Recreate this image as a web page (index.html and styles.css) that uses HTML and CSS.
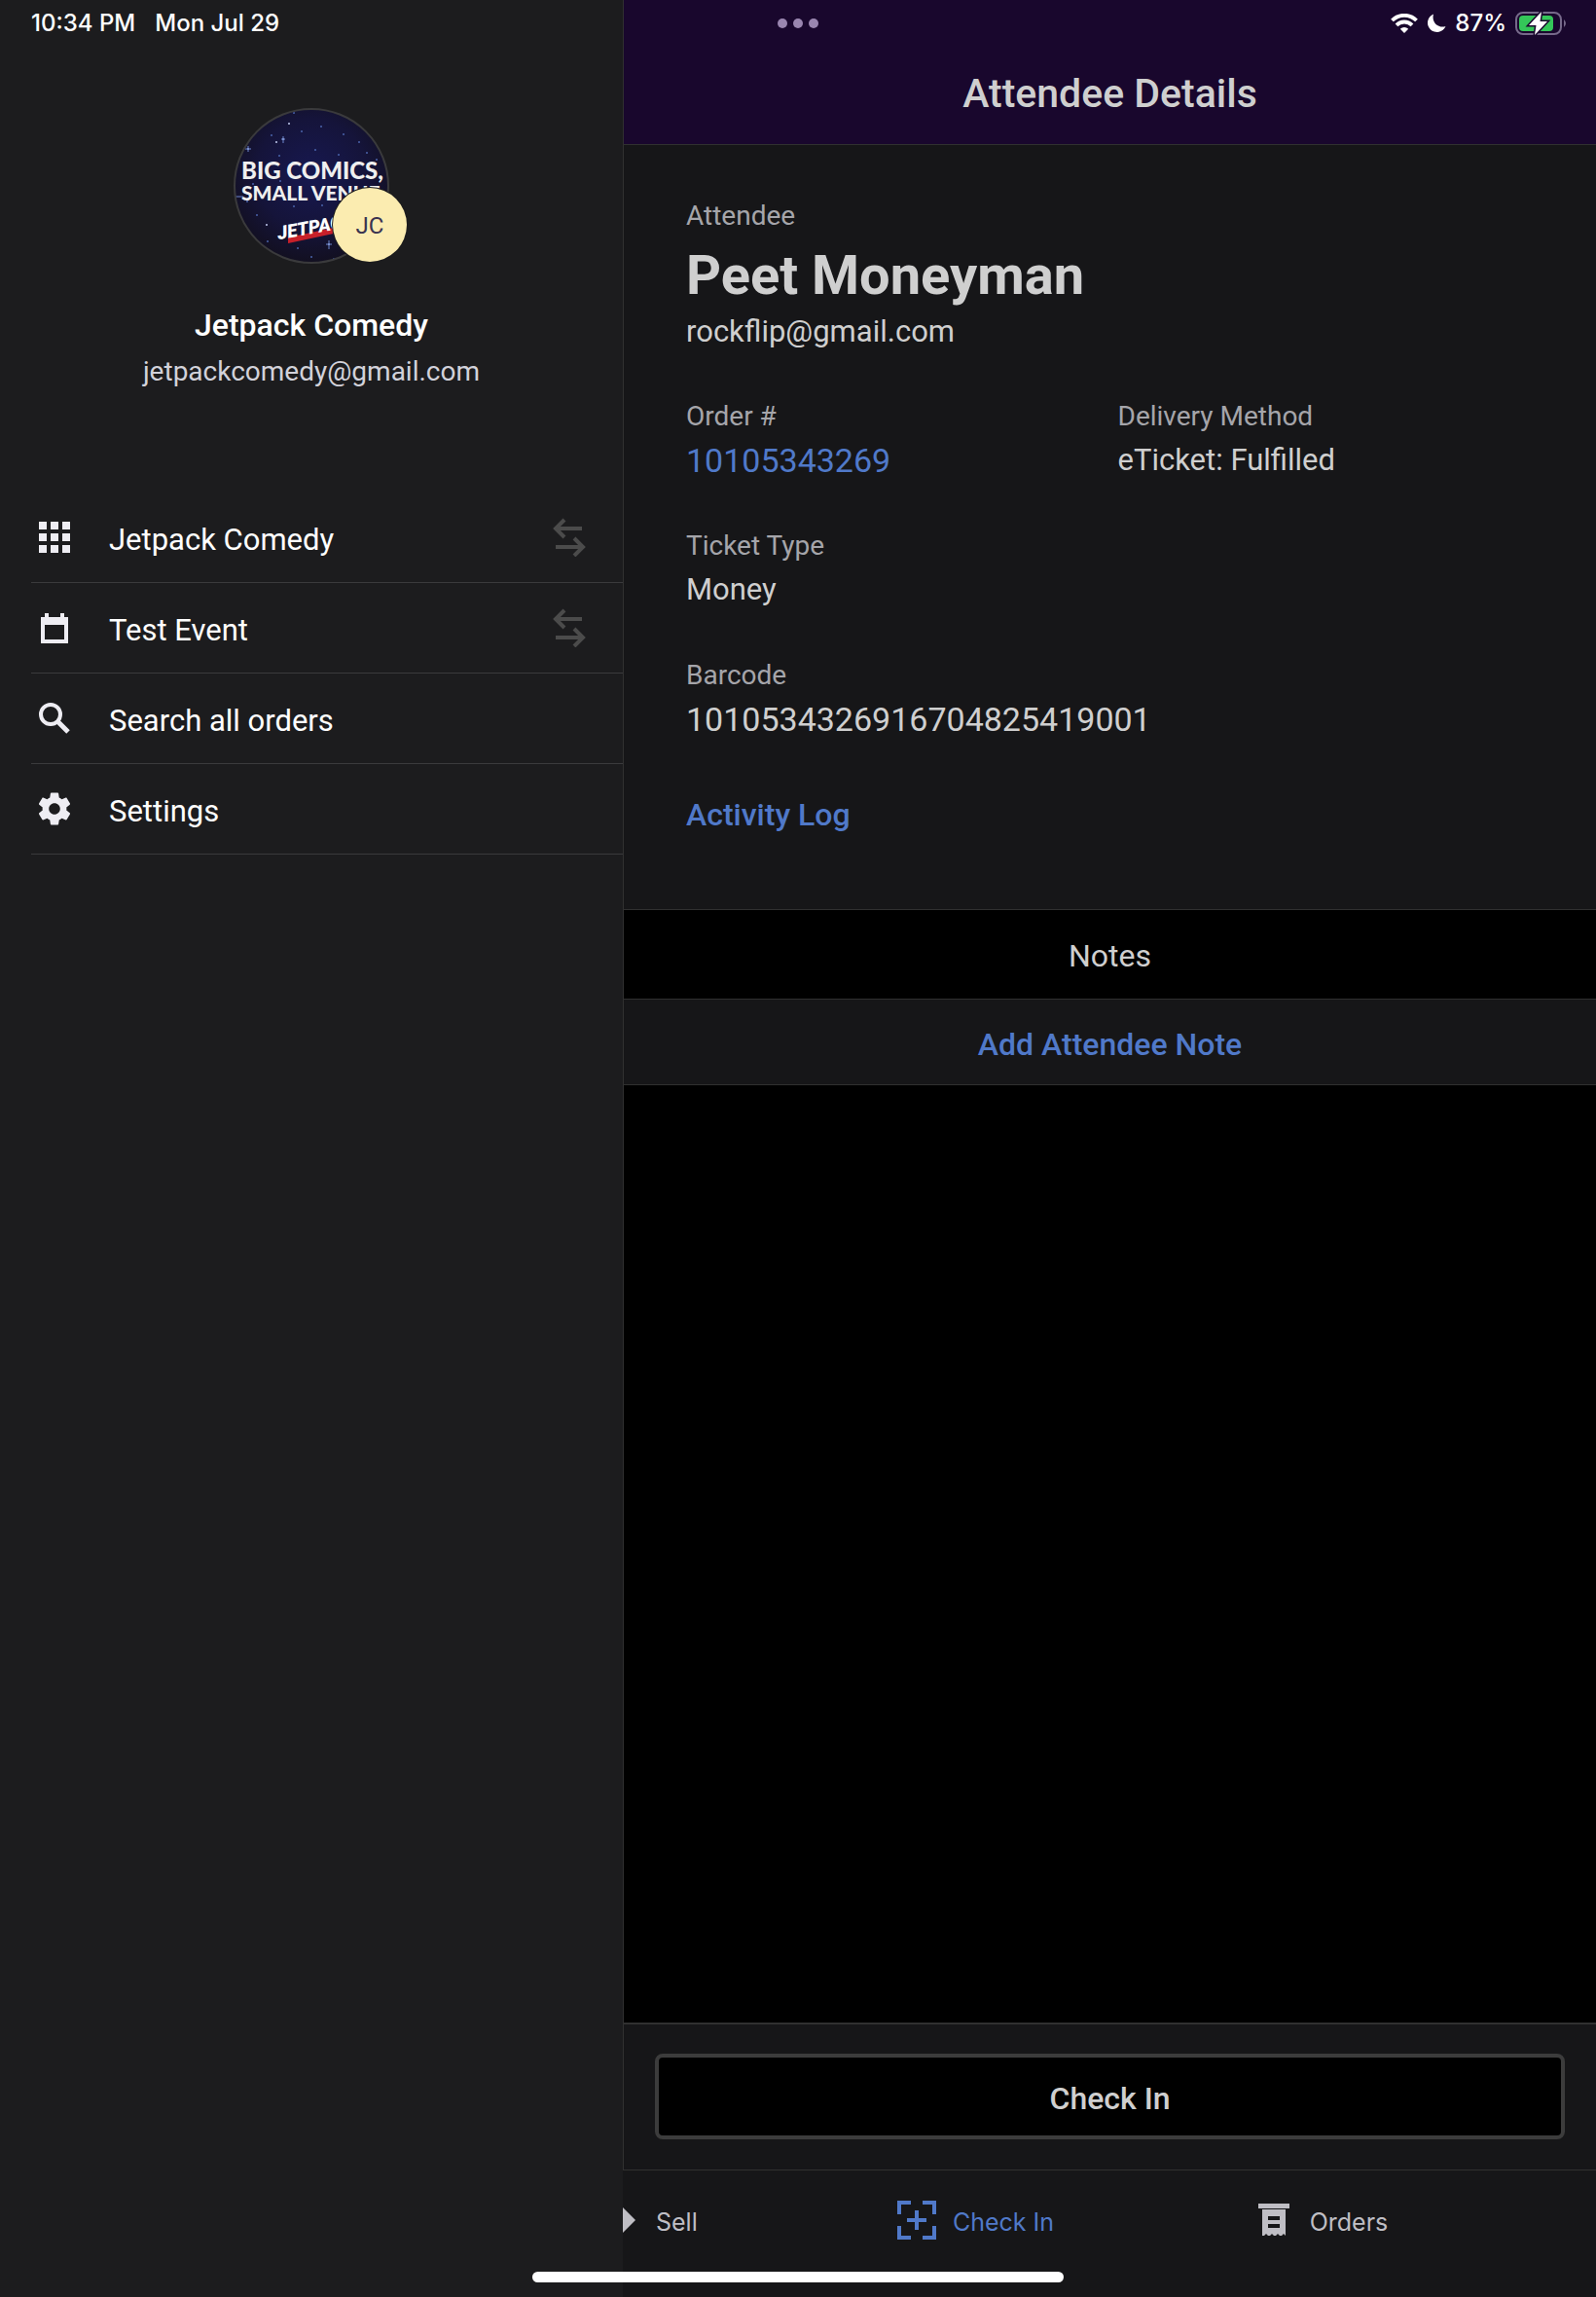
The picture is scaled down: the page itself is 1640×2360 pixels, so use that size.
FILE: index.html
```html
<!DOCTYPE html>
<html lang="en">
<head>
<meta charset="utf-8">
<meta name="viewport" content="width=device-width, initial-scale=1">
<title>Attendee Details</title>
<link rel="stylesheet" href="styles.css">
</head>
<body>
<div class="app">
  <aside class="sidebar">
    <section class="profile">
      <div class="avatar">
        <svg class="avatar-art" viewBox="0 0 160 160" role="img" aria-label="Big comics, small venue">
          <defs>
            <radialGradient id="night" cx="50%" cy="42%" r="60%">
              <stop offset="0" stop-color="#171850"/>
              <stop offset="0.6" stop-color="#15143a"/>
              <stop offset="1" stop-color="#120f1e"/>
            </radialGradient>
            <clipPath id="disc"><circle cx="80" cy="80" r="78"/></clipPath>
          </defs>
          <circle cx="80" cy="80" r="79" fill="url(#night)" stroke="#3a3a3c" stroke-width="2"/>
          <g clip-path="url(#disc)">
            <g fill="#4a63ab">
              <circle cx="62" cy="5" r="1"/><circle cx="90" cy="19" r="1"/><circle cx="70" cy="24" r="1"/><circle cx="39" cy="28" r="1"/><circle cx="113" cy="27" r="1"/><circle cx="129" cy="35" r="1"/><circle cx="137" cy="46" r="1"/><circle cx="28" cy="56" r="1"/><circle cx="47" cy="49" r="1"/><circle cx="108" cy="48" r="1"/><circle cx="84" cy="43" r="1"/><circle cx="147" cy="53" r="1"/><circle cx="14" cy="96" r="1"/><circle cx="24" cy="110" r="1"/><circle cx="62" cy="101" r="1"/><circle cx="91" cy="100" r="1"/><circle cx="35" cy="137" r="1"/><circle cx="66" cy="144" r="1"/><circle cx="80" cy="153" r="1"/><circle cx="103" cy="155" r="1"/><circle cx="20" cy="78" r="1"/><circle cx="48" cy="75" r="1"/>
            </g>
            <g fill="#c3cdf2">
              <circle cx="57" cy="16" r="1"/><circle cx="44" cy="35" r="1"/><circle cx="34" cy="120" r="1"/><circle cx="51" cy="32" r="1"/><circle cx="15" cy="42" r="1"/><circle cx="98" cy="140" r="1"/>
            </g>
            <path d="M51 29v7M49 32h4M15 39v6M12 42h6M98 136v9M95 140h6M2 91h8" stroke="#6f88d0" stroke-width="1"/>
            <text class="art-headline" x="8" y="73">BIG COMICS,</text>
            <text class="art-subline" x="8" y="95">SMALL VENUE</text>
            <path d="M56 133L112 121V127L56 139Z" fill="#c8202a"/>
            <text class="art-logo" transform="rotate(-10 47 135)" x="46" y="135">JETPACK</text>
          </g>
        </svg>
        <span class="badge">JC</span>
      </div>
      <h2 class="profile-name">Jetpack Comedy</h2>
      <p class="profile-email">jetpackcomedy@gmail.com</p>
    </section>
    <nav class="menu" aria-label="Main">
      <a class="menu-item" href="#organization">
        <svg class="menu-icon" viewBox="0 0 48 48" aria-hidden="true"><path d="M8 8h8v8H8zM20 8h8v8h-8zM32 8h8v8h-8zM8 20h8v8H8zM20 20h8v8h-8zM32 20h8v8h-8zM8 32h8v8H8zM20 32h8v8h-8zM32 32h8v8h-8z"/></svg>
        <span class="menu-label">Jetpack Comedy</span>
        <svg class="swap" viewBox="0 0 36 40" aria-hidden="true"><path d="M4 11H31M13 2L4 11L13 20M4 30H32M23 21L32 30L23 39"/></svg>
      </a>
      <a class="menu-item" href="#event">
        <svg class="menu-icon" viewBox="0 0 48 48" aria-hidden="true"><path fill-rule="evenodd" d="M14 9h4v4h12V9h4v4h4v27H10V13h4zM14 21v15h20V21z"/></svg>
        <span class="menu-label">Test Event</span>
        <svg class="swap" viewBox="0 0 36 40" aria-hidden="true"><path d="M4 11H31M13 2L4 11L13 20M4 30H32M23 21L32 30L23 39"/></svg>
      </a>
      <a class="menu-item" href="#search">
        <svg class="menu-icon" viewBox="0 0 48 48" aria-hidden="true"><circle cx="20" cy="20" r="10" fill="none" stroke="currentColor" stroke-width="4"/><path d="M27 27L38 38" stroke="currentColor" stroke-width="5"/></svg>
        <span class="menu-label">Search all orders</span>
      </a>
      <a class="menu-item" href="#settings">
        <svg class="menu-icon" viewBox="0 0 48 48" aria-hidden="true"><path transform="translate(4.200 4.200) scale(1.65)" d="M19.43 12.98c.04-.32.07-.64.07-.98s-.03-.66-.07-.98l2.11-1.65c.19-.15.24-.42.12-.64l-2-3.46c-.12-.22-.39-.3-.61-.22l-2.49 1c-.52-.4-1.08-.73-1.69-.98l-.38-2.65C14.46 2.180 14.250 2 14 2h-4c-.25 0-.46.18-.49.42l-.38 2.65c-.61.25-1.170.59-1.690.98l-2.490-1c-.23-.09-.49 0-.61.22l-2 3.460c-.13.22-.07.49.12.64l2.110 1.650c-.04.32-.07.65-.07.98s.03.66.07.98l-2.110 1.650c-.19.15-.24.42-.12.64l2 3.460c.12.22.39.3.61.22l2.490-1c.52.4 1.080.73 1.690.98l.38 2.650c.03.24.24.42.49.42h4c.25 0 .46-.18.49-.42l.38-2.650c.61-.25 1.170-.59 1.690-.98l2.490 1c.23.09.49 0 .61-.22l2-3.460c.12-.22.07-.49-.12-.64zM12 15.500c-1.930 0-3.500-1.570-3.500-3.500s1.570-3.500 3.500-3.500 3.500 1.570 3.500 3.500-1.570 3.500-3.500 3.500z"/></svg>
        <span class="menu-label">Settings</span>
      </a>
    </nav>
  </aside>

  <main class="detail">
    <header class="titlebar"><h1 class="title">Attendee Details</h1></header>

    <section class="info">
      <p class="label">Attendee</p>
      <p class="attendee-name">Peet Moneyman</p>
      <p class="attendee-email">rockflip@gmail.com</p>
      <dl class="fields">
        <div class="field">
          <dt class="label">Order #</dt>
          <dd class="value number"><a class="link" href="#order">10105343269</a></dd>
        </div>
        <div class="field">
          <dt class="label">Delivery Method</dt>
          <dd class="value">eTicket: Fulfilled</dd>
        </div>
        <div class="field wide">
          <dt class="label">Ticket Type</dt>
          <dd class="value">Money</dd>
        </div>
        <div class="field wide">
          <dt class="label">Barcode</dt>
          <dd class="value number">1010534326916704825419001</dd>
        </div>
      </dl>
      <a class="link strong" href="#activity">Activity Log</a>
    </section>

    <h2 class="notes-title">Notes</h2>
    <button class="add-note" type="button">Add Attendee Note</button>
    <div class="notes-list"></div>

    <div class="action"><button class="checkin" type="button">Check In</button></div>

    <nav class="tabs" aria-label="Sections">
      <a class="tab tab-first" href="#sell">
        <svg class="tab-edge" viewBox="0 0 17 40" aria-hidden="true"><path d="M0 7L13 20L0 33Z"/></svg>
        <span class="tab-label">Sell</span>
      </a>
      <a class="tab tab-active" href="#checkin" aria-current="page">
        <svg class="tab-icon" viewBox="0 0 40 40" aria-hidden="true"><path d="M2 14V2H14M26 2H38V14M38 26V38H26M14 38H2V26M20 10V30M10 20H30" fill="none" stroke="currentColor" stroke-width="4"/></svg>
        <span class="tab-label">Check In</span>
      </a>
      <a class="tab" href="#orders">
        <svg class="tab-icon" viewBox="0 0 40 40" aria-hidden="true"><path fill-rule="evenodd" d="M4 3H36V8H4ZM8 9H32V36L30 34L28 36H26L24 34L22 36H20L18 34L16 36H14L12 34L10 36H8ZM14 16V20H26V16ZM14 24V28H26V24Z"/></svg>
        <span class="tab-label">Orders</span>
      </a>
    </nav>
  </main>

  <div class="statusbar">
    <div class="status-left"><span>10:34 PM</span><span>Mon Jul 29</span></div>
    <svg class="dots" viewBox="0 0 44 12" aria-hidden="true"><circle cx="6" cy="6" r="5"/><circle cx="22" cy="6" r="5"/><circle cx="38" cy="6" r="5"/></svg>
    <div class="status-right">
      <svg class="wifi" viewBox="0 0 28 20" aria-hidden="true"><path d="M1.500 7a17.500 17.500 0 0 1 25 0M6 11.800a11.300 11.300 0 0 1 16 0" fill="none" stroke="#fff" stroke-width="3.800"/><path d="M14 20l-4.200-4.300a6 6 0 0 1 8.400 0z" fill="#fff"/></svg>
      <svg class="moon" viewBox="0 0 20 20" aria-hidden="true"><path d="M7 0.500A9.600 9.600 0 1 0 19.500 13C13 15.500 4.500 10 7 0.500z" fill="#fff"/></svg>
      <span class="percent">87%</span>
      <svg class="battery" viewBox="0 0 54 26" aria-hidden="true"><rect x="1" y="2" width="46" height="22" rx="7" fill="none" stroke="#76698a" stroke-width="2"/><path d="M50 9q4 4 0 8z" fill="#76698a"/><rect x="4" y="5" width="35" height="16" rx="4" fill="#34c759"/><path d="M27 1L14 15h7.500L20 25L33 11h-7.500z" fill="#fff" stroke="#19072d" stroke-width="3" paint-order="stroke"/></svg>
    </div>
  </div>
  <div class="home-indicator"></div>
</div>
</body>
</html>
```
FILE: styles.css
```css
:root {
  --panel: #1c1c1e;
  --surface: #161618;
  --line: #303030;
  --text: #cfcfcf;
  --muted: #a5a5aa;
  --blue: #5079c9;
  --app-font: Roboto, "Liberation Sans", sans-serif;
  --system-font: Inter, "Liberation Sans", sans-serif;
}

* { box-sizing: border-box; }

body {
  margin: 0;
  background: #000;
  color: var(--text);
  font: 400 31px/40px var(--app-font);
}

h1, h2, p, dl, dd { margin: 0; font-weight: 400; }
a { color: inherit; text-decoration: none; }
svg { display: block; flex: none; }

.app {
  position: relative;
  display: grid;
  grid-template-columns: 640px 1fr;
  min-height: 100vh;
}

/* Sidebar */
.sidebar { background: var(--panel); color: #fff; }

.profile {
  display: flex;
  flex-direction: column;
  align-items: center;
  padding: 111px 32px 106px;
}
.avatar { position: relative; width: 160px; height: 160px; margin-bottom: 43px; }
.avatar-art { width: 100%; height: 100%; }
.art-headline, .art-subline { fill: #efefef; font-family: Lato, sans-serif; font-weight: 900; }
.art-headline { font-size: 24px; }
.art-subline { font-size: 21px; }
.art-logo { fill: #fff; font: italic 900 19px Roboto, sans-serif; }
.badge {
  position: absolute;
  right: -18px;
  bottom: 2px;
  width: 76px;
  height: 76px;
  border-radius: 50%;
  background: #fbecb0;
  box-shadow: 0 0 0 1px var(--panel);
  color: #3a3350;
  font-size: 24px;
  line-height: 78px;
  text-align: center;
}
.profile-name { font-size: 32px; font-weight: 500; }
.profile-email { margin-top: 10px; color: #d2d2da; font-size: 28px; line-height: 36px; }

.menu { padding-left: 32px; }
.menu-item {
  display: flex;
  align-items: center;
  gap: 32px;
  height: 93px;
  padding-right: 37px;
  border-bottom: 1px solid #3a3a3c;
}
.menu-icon { width: 48px; height: 48px; color: #eeedf3; fill: currentColor; }
.menu-label { flex: 1; padding-top: 5px; }
.swap { width: 36px; height: 40px; fill: none; stroke: #4b4b4b; stroke-width: 4; }

/* Detail pane */
.detail {
  display: flex;
  flex-direction: column;
  min-width: 0;
  border-left: 1px solid var(--line);
}
.titlebar {
  padding: 72px 32px 28px;
  background: #19072d;
  border-bottom: 1px solid var(--line);
}
.title { font-size: 41px; font-weight: 500; line-height: 48px; text-align: center; }

.info {
  padding: 55px 64px 77px;
  background: var(--surface);
  border-bottom: 1px solid var(--line);
}
.label { color: var(--muted); font-size: 28px; line-height: 36px; }
.attendee-name { margin-top: 11px; font-size: 56px; font-weight: 700; line-height: 64px; }
.attendee-email { margin-top: 6px; }
.fields {
  display: grid;
  grid-template-columns: 1fr 1fr;
  gap: 50px 16px;
  margin: 49px 0 58px;
}
.wide { grid-column: 1 / -1; }
.value { margin-top: 7px; }
.number { font-size: 34px; }
.link { color: var(--blue); }
.strong { display: block; font-weight: 500; font-size: 32px; }

.notes-title {
  padding: 27px 32px 24px;
  border-bottom: 1px solid var(--line);
  font-size: 32px;
  text-align: center;
}
.add-note {
  padding: 26px 32px 21px;
  border: 0;
  border-bottom: 1px solid var(--line);
  background: var(--surface);
  color: var(--blue);
  font: 500 32px/40px var(--app-font);
}
.notes-list { flex: 1; }

.action {
  padding: 30px 32px 31px;
  border-top: 2px solid var(--line);
  border-bottom: 1px solid var(--line);
  background: var(--surface);
}
.checkin {
  display: block;
  width: 100%;
  padding: 22px 32px 18px;
  border: 4px solid #3c3c3c;
  border-radius: 8px;
  background: #000;
  color: var(--text);
  font: 500 32px/40px var(--app-font);
}

.tabs {
  display: grid;
  grid-template-columns: 185fr 355fr 355fr;
  height: 130px;
  margin-left: -1px;
  padding: 0 105px 28px 0;
  background: var(--surface);
  color: #bfbec4;
  font: 400 25px/32px var(--system-font);
}
.tab { display: flex; align-items: center; justify-content: center; gap: 17px; }
.tab-label { padding-top: 3px; }
.tab-first { justify-content: flex-start; }
.tab-active { color: var(--blue); }
.tab-icon { width: 40px; height: 40px; fill: currentColor; }
.tab-edge { width: 17px; height: 40px; fill: currentColor; }

/* System chrome floating over both panes */
.statusbar {
  position: absolute;
  inset: 0 0 auto;
  display: grid;
  grid-template-columns: 1fr auto 1fr;
  align-items: center;
  height: 48px;
  padding: 0 29px;
  color: #fff;
  font: 500 24px/32px var(--system-font);
}
.status-left, .status-right { display: flex; align-items: center; }
.status-left { gap: 20px; padding-left: 3px; }
.status-right { justify-content: flex-end; gap: 9px; }
.dots { width: 44px; height: 12px; fill: #9a86b0; }
.wifi { width: 28px; height: 20px; }
.moon { width: 20px; height: 20px; }
.battery { width: 54px; height: 26px; }

.home-indicator {
  position: absolute;
  right: 0;
  bottom: 15px;
  left: 0;
  width: 33.3%;
  height: 11px;
  margin: 0 auto;
  border-radius: 6px;
  background: #fff;
}
```
